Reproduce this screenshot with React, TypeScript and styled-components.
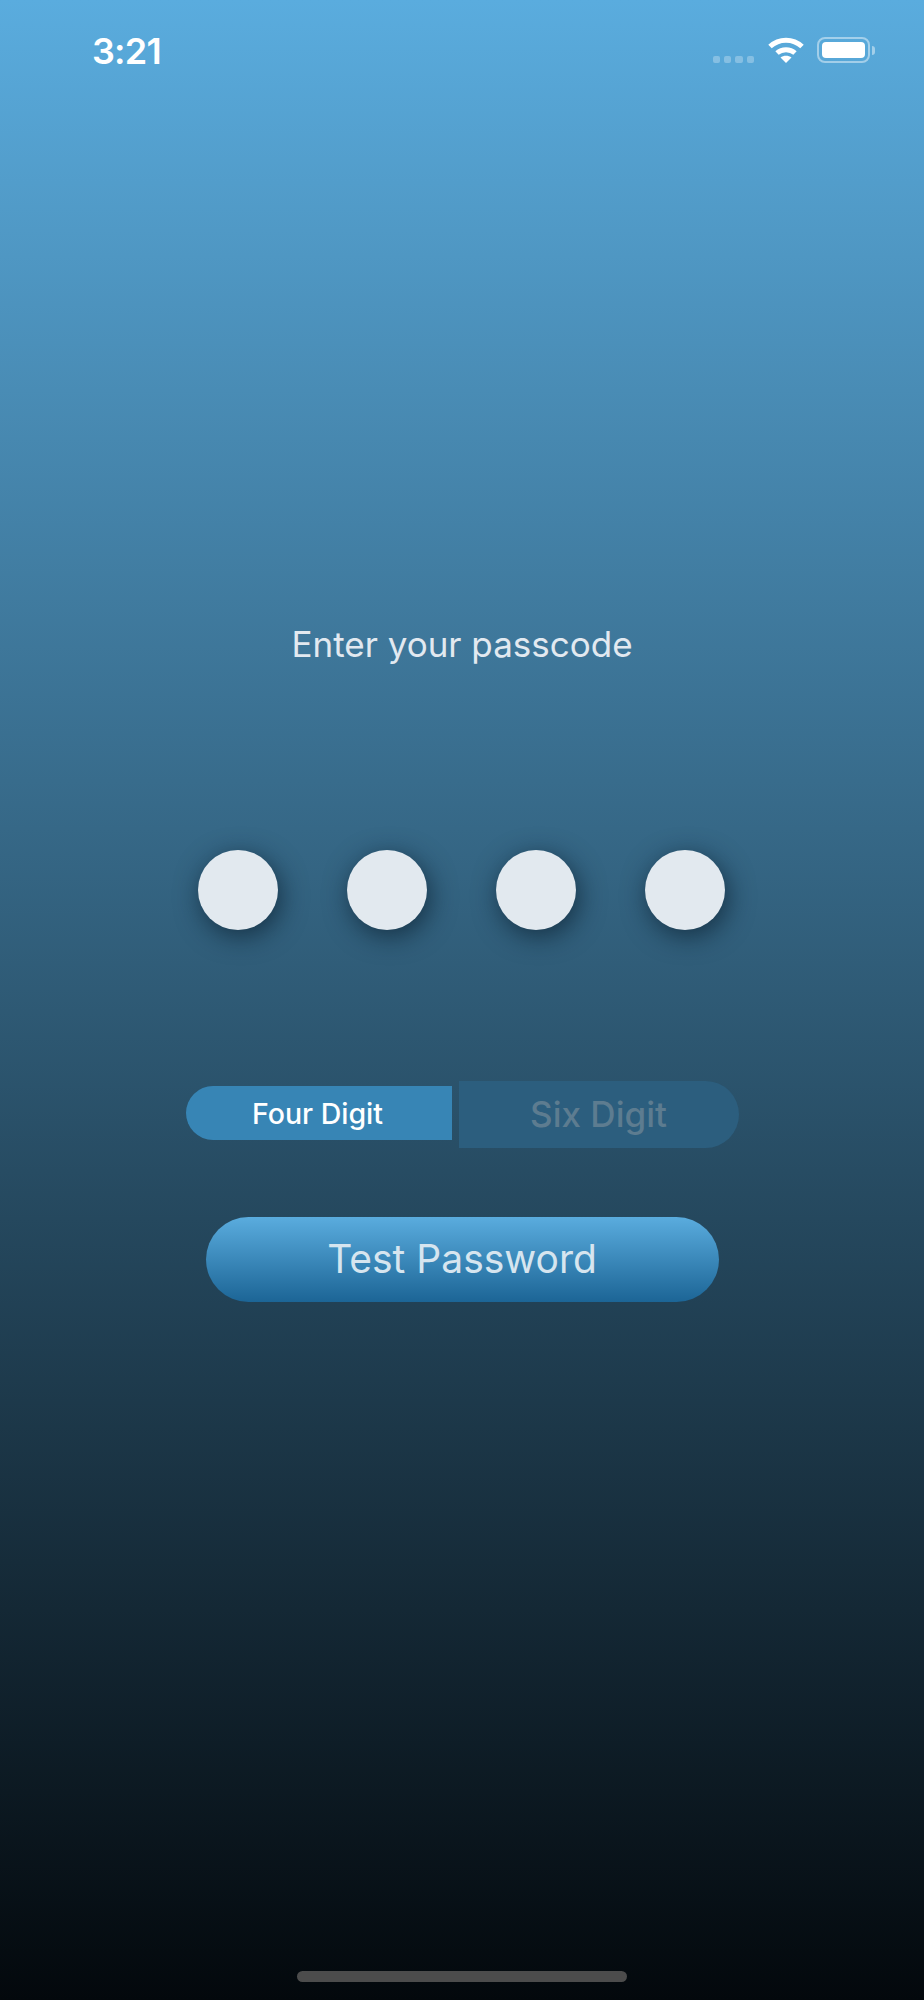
import * as React from "react";
import styled, { createGlobalStyle } from "styled-components";

const GlobalStyle = createGlobalStyle`
  html, body {
    margin: 0;
    padding: 0;
    background: #000;
  }
  * {
    box-sizing: border-box;
  }
`;

const Screen = styled.div`
  width: 924px;
  height: 2000px;
  display: flex;
  flex-direction: column;
  align-items: center;
  font-family: Inter, "Liberation Sans", sans-serif;
  background: linear-gradient(180deg, #5aacde 0%, #03080c 100%);
`;

const StatusBar = styled.div`
  width: 100%;
  height: 100px;
  padding: 30px 53px 0 92px;
  display: flex;
  justify-content: space-between;
  align-items: flex-start;
`;

const Time = styled.div`
  font-size: 36px;
  line-height: 42px;
  font-weight: 600;
  color: #fff;
  letter-spacing: -0.8px;
`;

const StatusIcons = styled.div`
  display: flex;
  align-items: flex-end;
  margin-top: 7px;
`;

const SignalDots = styled.div`
  display: flex;
  gap: 3.8px;
  margin-right: 14px;
`;

const SignalDot = styled.span`
  width: 7.5px;
  height: 7px;
  border-radius: 2px;
  background: rgba(255, 255, 255, 0.28);
`;

const WifiIcon = styled.svg`
  display: block;
  width: 36px;
  height: 26px;
  margin-right: 13px;
`;

const Battery = styled.div`
  width: 53px;
  height: 26px;
  padding: 3px;
  border: 2px solid rgba(255, 255, 255, 0.45);
  border-radius: 8px;
  margin-right: 2px;
`;

const BatteryFill = styled.div`
  width: 100%;
  height: 100%;
  background: #fff;
  border-radius: 4px;
`;

const BatteryNub = styled.div`
  width: 3px;
  height: 9px;
  margin-bottom: 8px;
  margin-right: -4px;
  background: rgba(255, 255, 255, 0.45);
  border-radius: 0 3px 3px 0;
`;

const Prompt = styled.div`
  margin-top: 523px;
  font-size: 35px;
  line-height: 42px;
  color: #e2e9f0;
`;

const Dots = styled.div`
  margin-top: 185px;
  margin-right: 1px;
  display: flex;
  gap: 69px;
`;

const Dot = styled.div`
  width: 80px;
  height: 80px;
  border-radius: 50%;
  background: #e2e9ef;
  box-shadow: 3px 6px 26px rgba(10, 30, 45, 0.7);
`;

const DigitSwitch = styled.div`
  margin-top: 151px;
  display: flex;
  align-items: flex-start;
  gap: 7px;
`;

const FourDigit = styled.div`
  width: 266px;
  height: 54px;
  margin-top: 5px;
  padding-right: 2px;
  display: flex;
  align-items: center;
  justify-content: center;
  border-radius: 27px 0 0 27px;
  background: #3785b5;
  color: #fff;
  font-size: 28.5px;
  font-weight: 500;
`;

const SixDigit = styled.div`
  width: 280px;
  height: 67px;
  padding-bottom: 2px;
  display: flex;
  align-items: center;
  justify-content: center;
  border-radius: 0 33.5px 33.5px 0;
  background: #2c5e7e;
  color: #5d7c90;
  font-size: 35px;
  font-weight: 500;
`;

const TestButton = styled.button`
  margin-top: 69px;
  width: 513px;
  height: 85px;
  padding: 0 0 2px;
  border: 0;
  border-radius: 42.5px;
  background: linear-gradient(180deg, #5aacde 0%, #1c6596 100%);
  color: #d6e5ef;
  font-family: inherit;
  font-size: 39px;
  font-weight: 400;
`;

const HomeIndicator = styled.div`
  margin-top: auto;
  margin-bottom: 18px;
  width: 330px;
  height: 11px;
  border-radius: 6px;
  background: #4c4c4c;
`;

export default function App() {
  return (
    <>
      <GlobalStyle />
      <Screen>
        <StatusBar>
          <Time>3:21</Time>
          <StatusIcons>
            <SignalDots>
              <SignalDot />
              <SignalDot />
              <SignalDot />
              <SignalDot />
            </SignalDots>
            <WifiIcon viewBox="0 0 36 26">
              <path
                d="M2 9.5 C11 1 25 1 34 9.5"
                fill="none"
                stroke="#fff"
                strokeWidth="5"
              />
              <path
                d="M9 16 C14 11.5 22 11.5 27 16"
                fill="none"
                stroke="#fff"
                strokeWidth="5"
              />
              <path d="M12.5 20.5 C15.5 18 20.5 18 23.5 20.5 L18 26 Z" fill="#fff" />
            </WifiIcon>
            <Battery>
              <BatteryFill />
            </Battery>
            <BatteryNub />
          </StatusIcons>
        </StatusBar>
        <Prompt>Enter your passcode</Prompt>
        <Dots>
          <Dot />
          <Dot />
          <Dot />
          <Dot />
        </Dots>
        <DigitSwitch>
          <FourDigit>Four Digit</FourDigit>
          <SixDigit>Six Digit</SixDigit>
        </DigitSwitch>
        <TestButton>Test Password</TestButton>
        <HomeIndicator />
      </Screen>
    </>
  );
}
